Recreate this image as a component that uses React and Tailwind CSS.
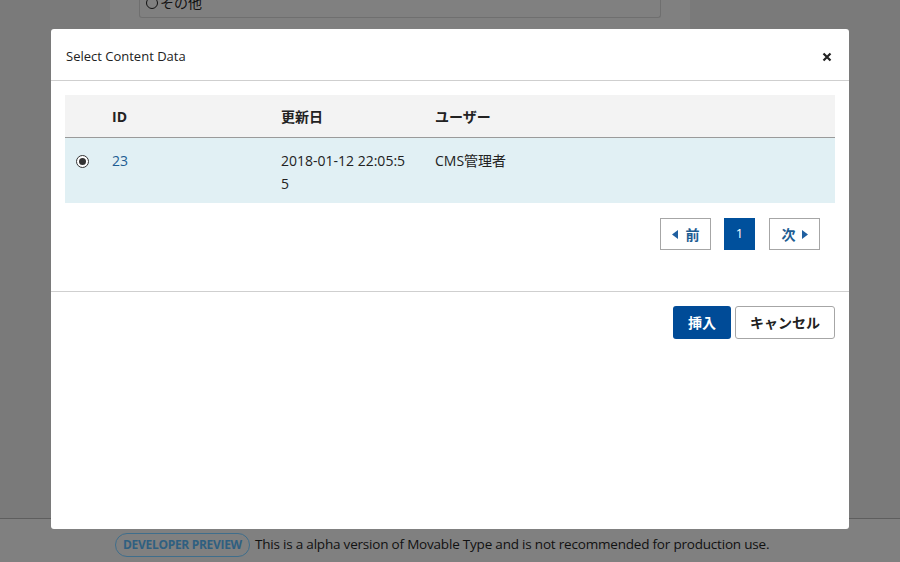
import React from 'react'

function Radio({ checked }) {
  return (
    <span className="inline-flex items-center justify-center w-[13px] h-[13px] rounded-full border border-[#333] bg-white">
      {checked && <span className="w-[7px] h-[7px] rounded-full bg-[#333]" />}
    </span>
  )
}

function Caret({ dir }) {
  return (
    <svg width="6" height="9" viewBox="0 0 6 9" className="fill-[#1f5fa0]">
      {dir === 'left' ? <path d="M6 0 L0 4.5 L6 9 Z" /> : <path d="M0 0 L6 4.5 L0 9 Z" />}
    </svg>
  )
}

export default function App() {
  const font = { fontFamily: '"Open Sans", "Noto Sans CJK JP", sans-serif' }
  return (
    <div className="relative w-[900px] h-[562px] overflow-hidden flex flex-col" style={font}>
      {/* page under the overlay */}
      <div className="flex flex-1">
        <div className="w-[110px] bg-[#7a7a7a]" />
        <div className="w-[580px] bg-[#808080] px-[29px]">
          <div className="h-[18px] border border-[#6f6f6f] border-t-0 rounded-b-[3px] pl-[6px] overflow-hidden">
            <span className="flex items-center gap-[2px] text-[14px] leading-[18px] text-[#111] -mt-[6px]">
              <span className="w-[12px] h-[12px] rounded-full border border-[#111]" />
              その他
            </span>
          </div>
        </div>
        <div className="flex-1 bg-[#7a7a7a]" />
      </div>
      <div className="h-[44px] border-t border-[#5e5e5e] bg-[#808080] flex items-center pl-[115px] pt-[8px] gap-[5px]">
        <span className="h-[24px] px-[7px] rounded-full border border-[#3f6e8c] text-[#2f5f80] text-[12px] font-bold flex items-center tracking-[-0.3px]">
          DEVELOPER PREVIEW
        </span>
        <span className="text-[13.5px] text-[#111] tracking-[-0.2px]">
          This is a alpha version of Movable Type and is not recommended for production use.
        </span>
      </div>

      {/* modal */}
      <div className="absolute left-[51px] top-[29px] w-[798px] h-[500px] bg-white rounded-[3px] flex flex-col">
        <div className="h-[52px] border-b border-[#cfcfcf] flex items-center justify-between pl-[15px] pr-[17px]">
          <span className="text-[13px] text-[#222] pt-[4px]">Select Content Data</span>
          <svg width="10" height="10" viewBox="0 0 10 10" className="mt-[4px]">
            <path d="M1.5 1.5 L8.5 8.5 M8.5 1.5 L1.5 8.5" stroke="#222" strokeWidth="2.2" />
          </svg>
        </div>
        <div className="h-[211px] border-b border-[#cfcfcf] px-[14px] pt-[14px]">
          <div className="grid grid-cols-[47px_169px_154px_1fr] h-[43px] bg-[#f3f3f3] border-b border-[#9a9a9a] items-center text-[14px] font-bold text-[#222]">
            <div />
            <div>ID</div>
            <div>更新日</div>
            <div>ユーザー</div>
          </div>
          <div className="grid grid-cols-[47px_169px_154px_1fr] h-[65px] bg-[#e1f0f4] text-[14px] leading-[23px] text-[#222] pt-[11px]">
            <div className="pl-[11px] -mt-[1px]"><Radio checked /></div>
            <div className="text-[#1d5d92]">23</div>
            <div>2018-01-12 22:05:5<br />5</div>
            <div>CMS管理者</div>
          </div>
          <div className="flex justify-end items-center pr-[15px] mt-[15px] text-[14px] font-bold">
            <span className="w-[51px] h-[32px] border border-[#a6a6a6] flex items-center justify-center gap-[8px] text-[#1d5d92]">
              <Caret dir="left" />前
            </span>
            <span className="ml-[13px] w-[31px] h-[32px] bg-[#00509c] text-white flex items-center justify-center font-normal text-[13px]">1</span>
            <span className="ml-[14px] w-[51px] h-[32px] border border-[#a6a6a6] flex items-center justify-center gap-[6px] text-[#1d5d92]">
              次<Caret dir="right" />
            </span>
          </div>
        </div>
        <div className="flex justify-end gap-[4px] px-[14px] pt-[14px]">
          <button className="w-[58px] h-[33px] rounded-[3px] bg-[#004b97] text-white text-[14px] font-bold">挿入</button>
          <button className="w-[100px] h-[33px] rounded-[3px] border border-[#a6a6a6] bg-white text-[#222] text-[14px] font-bold">キャンセル</button>
        </div>
      </div>
    </div>
  )
}
